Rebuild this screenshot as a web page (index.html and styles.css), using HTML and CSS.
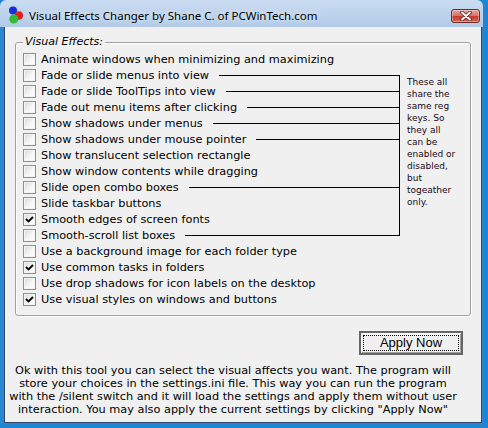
FILE: index.html
```html
<!DOCTYPE html>
<html lang="en">
<head>
    <meta charset="UTF-8">
    <title>Visual Effects Changer</title>
    <link rel="stylesheet" href="styles.css">
</head>
<body>
    <div class="window">
        <div class="titlebar">
            <svg class="app-icon" width="16" height="18" viewBox="0 0 16 18">
                <circle cx="5" cy="4.5" r="4" fill="#1a2ed6"/>
                <circle cx="11" cy="9.5" r="4.2" fill="#e3221d"/>
                <circle cx="5.8" cy="13" r="4.5" fill="#2fbd34"/>
            </svg>
            <span class="title">Visual Effects Changer by Shane C. of PCWinTech.com</span>
            <button class="close" title="Close">
                <svg width="12" height="10" viewBox="0 0 12 10">
                    <path d="M2 1.5 L10 8.5 M10 1.5 L2 8.5" stroke="#5a2620" stroke-width="3.6" stroke-linecap="round"/>
                    <path d="M2 1.5 L10 8.5 M10 1.5 L2 8.5" stroke="#fff" stroke-width="1.9" stroke-linecap="round"/>
                </svg>
            </button>
        </div>

        <div class="client">
            <fieldset class="effects">
                <legend>Visual Effects:</legend>
                <div class="effects-body">
                    <div class="options">
                        <label class="option"><span class="box"></span>Animate windows when minimizing and maximizing</label>
                        <div class="bracket">
                            <label class="option"><span class="box"></span>Fade or slide menus into view<span class="link"></span></label>
                            <label class="option"><span class="box"></span>Fade or slide ToolTips into view<span class="link"></span></label>
                            <label class="option"><span class="box"></span>Fade out menu items after clicking<span class="link"></span></label>
                            <label class="option"><span class="box"></span>Show shadows under menus<span class="link"></span></label>
                            <label class="option"><span class="box"></span>Show shadows under mouse pointer<span class="link"></span></label>
                            <label class="option"><span class="box"></span>Show translucent selection rectangle</label>
                            <label class="option"><span class="box"></span>Show window contents while dragging</label>
                            <label class="option"><span class="box"></span>Slide open combo boxes<span class="link"></span></label>
                            <label class="option"><span class="box"></span>Slide taskbar buttons</label>
                            <label class="option"><span class="box checked"></span>Smooth edges of screen fonts</label>
                            <label class="option"><span class="box"></span>Smooth-scroll list boxes<span class="link"></span></label>
                        </div>
                        <label class="option"><span class="box"></span>Use a background image for each folder type</label>
                        <label class="option"><span class="box checked"></span>Use common tasks in folders</label>
                        <label class="option"><span class="box"></span>Use drop shadows for icon labels on the desktop</label>
                        <label class="option"><span class="box checked"></span>Use visual styles on windows and buttons</label>
                    </div>
                    <p class="note">These all<br>share the<br>same reg<br>keys. So<br>they all<br>can be<br>enabled or<br>disabled,<br>but<br>togeather<br>only.</p>
                </div>
            </fieldset>

            <div class="actions">
                <button class="apply"><span>Apply Now</span></button>
            </div>

            <p class="help">
                Ok with this tool you can select the visual affects you want. The program will<br>
                store your choices in the settings.ini file. This way you can run the program<br>
                with the /silent switch and it will load the settings and apply them without user<br>
                interaction. You may also apply the current settings by clicking "Apply Now"
            </p>
        </div>
    </div>
</body>
</html>
```

FILE: styles.css
```css
* {
    box-sizing: border-box;
}

body {
    margin: 0;
    background: #1f85d2;
    font-family: "DejaVu Sans", Verdana, sans-serif;
    font-size: 11px;
    color: #000;
}

.window {
    width: 483px;
    height: 424px;
    display: flex;
    flex-direction: column;
    border-radius: 6px 6px 0 0;
    background: linear-gradient(#cadcf1, #b1cae7 27px, #2a86d1 27px);
}

.titlebar {
    height: 27px;
    display: flex;
    align-items: flex-start;
    padding: 0 3px 0 8px;
}

.app-icon {
    margin-top: 6px;
}

.title {
    flex: 1;
    margin: 7px 0 0 5px;
    font-family: "Noto Sans", sans-serif;
    font-size: 11.5px;
    line-height: 18px;
    text-shadow: 0 0 6px #fff;
}

.close {
    width: 29px;
    height: 14px;
    margin-top: 9px;
    padding: 0;
    display: flex;
    align-items: center;
    justify-content: center;
    border: 1px solid #6e2a24;
    border-radius: 3px;
    background: linear-gradient(#e6a49b, #d6776c 45%, #c2392c 55%, #d2685c);
    box-shadow: inset 0 0 0 1px rgba(255,255,255,0.35);
}

.client {
    flex: 1;
    margin: 0 1px 1px 4px;
    display: flex;
    flex-direction: column;
    background: #f0f0f0;
    border: 1px solid #2f4966;
    border-top: 0;
}

.effects {
    margin: 7px 10px 0;
    padding: 1px 2px 8px 7px;
    min-width: 0;
    border: 1px solid #a0a0a0;
    border-radius: 3px;
    box-shadow: 1px 1px 0 #fff, inset 1px 1px 0 #fff;
}

.effects legend {
    padding: 0 2px;
    font-style: italic;
    line-height: 16px;
    background: #f0f0f0;
}

.effects-body {
    display: flex;
}

.options {
    width: 377px;
    flex: none;
    font-size: 11.3px;
}

.option {
    display: flex;
    align-items: center;
    height: 16px;
    white-space: nowrap;
}

.box {
    width: 13px;
    height: 13px;
    flex: none;
    margin-right: 5px;
    border: 1px solid #8e8f8f;
    background: linear-gradient(135deg, #d8d8d8, #f6f6f6 55%, #fff);
    box-shadow: inset 0 0 0 1px #f4f4f4;
}

.box.checked {
    background-image: url("data:image/svg+xml,%3Csvg xmlns='http://www.w3.org/2000/svg' width='11' height='11'%3E%3Cpath d='M2 5 L4.5 7.5 L9 3' fill='none' stroke='%23000' stroke-width='1.8'/%3E%3C/svg%3E"), linear-gradient(135deg, #d8d8d8, #f6f6f6 55%, #fff);
    background-repeat: no-repeat;
}

.link {
    flex: 1;
    height: 1px;
    align-self: flex-start;
    margin: 8px 0 0 10px;
    background: #000;
}

.bracket {
    position: relative;
}

.bracket::after {
    content: "";
    position: absolute;
    right: 0;
    top: 8px;
    bottom: 7px;
    border-right: 1px solid #000;
}

.note {
    margin: 25px 0 0 7px;
    font-size: 9px;
    line-height: 12px;
    color: #1a0a14;
}

.actions {
    display: flex;
    justify-content: flex-end;
    margin: 15px 18px 0 0;
}

.apply {
    width: 104px;
    height: 24px;
    padding: 0;
    border: 2px solid #666;
    background: #f0f0f0;
    box-shadow: inset 1px 1px 0 #fff, inset -1px -1px 0 #a0a0a0;
    font-family: "Liberation Sans", Arial, sans-serif;
    font-size: 13px;
    color: #000;
}

.apply span {
    display: block;
    margin: 2px;
    border: 1px dotted #000;
    line-height: 14px;
}

.help {
    margin: 9px 20px 0 0;
    text-align: center;
    font-size: 11.3px;
    line-height: 13px;
}
```
